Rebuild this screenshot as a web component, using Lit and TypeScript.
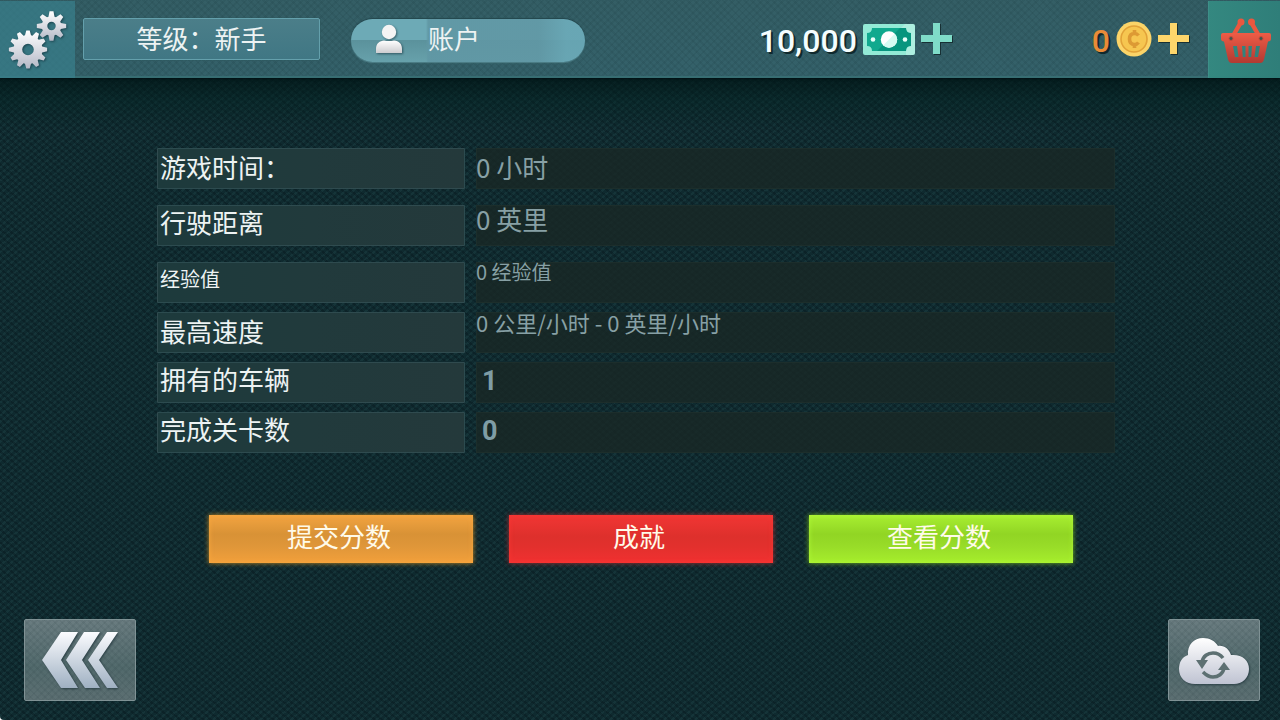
import { LitElement, html, css, svg } from "lit";
import { customElement, state } from "lit/decorators.js";
import { classMap } from "lit/directives/class-map.js";

interface Stat {
  label: string;
  value: string;
  labelClass: string;
  valueClass: string;
  group: string;
}

const STATS: Stat[] = [
  { label: "游戏时间：", value: "0 小时", labelClass: "", valueClass: "", group: "loose" },
  { label: "行驶距离", value: "0 英里", labelClass: "lifted", valueClass: "raised", group: "loose" },
  { label: "经验值", value: "0 经验值", labelClass: "small lifted", valueClass: "small high", group: "" },
  { label: "最高速度", value: "0 公里/小时 - 0 英里/小时", labelClass: "", valueClass: "medium high", group: "" },
  { label: "拥有的车辆", value: "1", labelClass: "lifted", valueClass: "count", group: "" },
  { label: "完成关卡数", value: "0", labelClass: "lifted", valueClass: "count", group: "" },
];

const split = (names: string) =>
  Object.fromEntries(names.split(" ").filter(Boolean).map((n) => [n, true]));

/** Outline of a cog wheel with a round hole in the middle. */
function cog(cx: number, cy: number, outer: number, base: number, hole: number, teeth: number) {
  const pts: string[] = [];
  const step = (Math.PI * 2) / teeth;
  for (let i = 0; i < teeth; i++) {
    const a = i * step - Math.PI / 2;
    for (const [offset, r] of [[-0.4, base], [-0.17, outer], [0.17, outer], [0.4, base]]) {
      const t = a + offset * step;
      pts.push(`${(cx + r * Math.cos(t)).toFixed(2)} ${(cy + r * Math.sin(t)).toFixed(2)}`);
    }
  }
  return `M${pts.join("L")}ZM${cx - hole} ${cy}a${hole} ${hole} 0 1 0 ${hole * 2} 0a${hole} ${hole} 0 1 0 ${-hole * 2} 0Z`;
}

const silver = (id: string, from = "#ffffff", to = "#b4b8c6") => svg`
  <linearGradient id=${id} x1="0" y1="0" x2="0" y2="1">
    <stop offset="0" stop-color=${from}></stop><stop offset="1" stop-color=${to}></stop>
  </linearGradient>`;

@customElement("app-root")
export class AppRoot extends LitElement {
  @state() private stats = STATS;

  static styles = css`
    :host {
      display: flex;
      flex-direction: column;
      min-height: 100vh;
      box-sizing: border-box;
      border-radius: 0 0 0 4px;
      overflow: hidden;
      font-family: "Noto Sans CJK SC", sans-serif;
      color: #edf3f3;
      background:
        linear-gradient(180deg, rgba(0, 22, 22, 0.7) 78px, rgba(0, 34, 32, 0.4) 100px, transparent 130px),
        repeating-linear-gradient(40deg, rgba(0, 8, 14, 0.22) 0 2px, transparent 2px 5px),
        repeating-linear-gradient(-40deg, rgba(46, 92, 94, 0.2) 0 2px, transparent 2px 5px),
        #0f2a2f;
    }
    button {
      border: 0;
      margin: 0;
      padding: 0;
      font: inherit;
      color: inherit;
      cursor: pointer;
    }
    svg { display: block; }
    .bar {
      display: flex;
      align-items: center;
      height: 78px;
      background:
        repeating-linear-gradient(45deg, rgba(20, 50, 55, 0.1) 0 2px, transparent 2px 5px),
        repeating-linear-gradient(-45deg, rgba(20, 50, 55, 0.1) 0 2px, transparent 2px 5px),
        linear-gradient(#345e65, #34616a);
      box-shadow: inset 0 -2px #376d72, 0 1px 2px #001014;
    }
    .settings {
      width: 75px;
      height: 77px;
      background: rgba(57, 128, 141, 0.7);
    }
    .settings path, .silver { filter: drop-shadow(1px 1px 1px rgba(0, 20, 30, 0.5)); }
    .level {
      box-sizing: border-box;
      width: 237px;
      height: 42px;
      margin: 0 31px 0 8px;
      border: 1px solid #64a0ac;
      border-radius: 2px;
      background: linear-gradient(#4b7e89, #407784);
      font-size: 26px;
      line-height: 38px;
      text-align: center;
      box-shadow: 0 0 1px #22464e;
    }
    .account {
      display: flex;
      align-items: center;
      width: 234px;
      height: 43px;
      margin-top: 2px;
      padding-left: 24px;
      box-sizing: border-box;
      border-radius: 22px;
      gap: 25px;
      font-size: 26px;
      line-height: 38px;
      background:
        linear-gradient(90deg, transparent 32%, rgba(96, 151, 164, 0.9) 33% 80%, rgba(104, 166, 180, 0.9) 92%),
        linear-gradient(#6daab6 0 48%, #5b929c 50%, #67a1ab);
      box-shadow: 0 -1px 1px #24474e, 0 1px 1px #4e8089;
    }
    .account span { padding-bottom: 4px; }
    .account svg { margin-top: -2px; }
    .purse {
      display: flex;
      align-items: center;
      gap: 6px;
      font: 500 32px/40px Roboto, sans-serif;
      text-shadow: 2px 2px 0 #10292d;
    }
    .purse span { padding-top: 4px; }
    .cash { margin-left: auto; color: #f4fdff; }
    .coins { margin: 0 19px 0 140px; color: #e98b38; }
    .plus svg { filter: drop-shadow(1px 1px 0 #173034); }
    .plus { background: none; padding-bottom: 2px; }
    .shop {
      width: 72px;
      height: 77px;
      background: linear-gradient(90deg, #348880, #2f7e79);
      box-shadow: inset 1px 0 #3d8f88;
    }
    .stats {
      margin: 0;
      padding: 70px 165px 0 157px;
      display: flex;
      flex-direction: column;
      gap: 9px;
    }
    .row {
      display: grid;
      grid-template-columns: 308px 1fr;
      gap: 11px;
    }
    .loose { margin-bottom: 7px; }
    .label, .value {
      box-sizing: border-box;
      height: 41px;
      margin: 0;
      font-size: 26px;
      line-height: 38px;
      white-space: nowrap;
    }
    .label {
      padding-left: 2px;
      border: 1px solid rgba(60, 92, 98, 0.5);
      border-radius: 1px;
      line-height: 36px;
      background: linear-gradient(90deg, #1d3a3c, #213a3c 50%, #24393b);
    }
    .value {
      color: #87a0a5;
      background: rgba(25, 40, 38, 0.8);
      box-shadow: inset 0 0 0 1px rgba(32, 48, 46, 0.7);
    }
    .small { font-size: 20px; }
    .medium { font-size: 22px; }
    .label.lifted { line-height: 32px; }
    .raised { line-height: 28px; }
    .high { line-height: 20px; }
    .count {
      padding-left: 6px;
      font-family: Roboto, sans-serif;
      font-weight: 700;
      font-size: 27px;
      color: #7f9da5;
    }
    .actions {
      display: flex;
      justify-content: center;
      gap: 36px;
      padding: 62px 0 0 2px;
    }
    .action {
      width: 264px;
      height: 48px;
      padding: 0 4px 6px 0;
      font-size: 26px;
      line-height: 40px;
      color: #fffbe9;
    }
    .submit {
      background: linear-gradient(#f3a440, #d89236 40%, #df9639 65%, #f2a03b);
      box-shadow: 0 0 5px #c58a26, inset 0 0 5px #faa83f;
    }
    .awards {
      background: linear-gradient(#f13634, #de302c 45%, #e2302d 65%, #f13131);
      box-shadow: 0 0 5px #a42d32, inset 0 0 5px #fa3634;
    }
    .scores {
      background: linear-gradient(#a8ef31, #91d524 40%, #98dc28 65%, #a6ee2d);
      box-shadow: 0 0 5px #72b41f, inset 0 0 5px #b0fa38;
    }
    .foot {
      display: flex;
      justify-content: space-between;
      margin-top: auto;
      padding: 0 20px 19px 24px;
    }
    .tile {
      display: grid;
      place-items: center;
      box-sizing: border-box;
      height: 82px;
      border: 1px solid #809295;
      border-radius: 2px;
      background:
        repeating-linear-gradient(45deg, rgba(30, 50, 55, 0.08) 0 2px, transparent 2px 5px),
        repeating-linear-gradient(-45deg, rgba(30, 50, 55, 0.08) 0 2px, transparent 2px 5px),
        linear-gradient(#6a7c80, #526a6c 60%, #5c6f72);
    }
    .back { width: 112px; }
    .sync { width: 92px; }
  `;

  private plus(color: string) {
    return html`<svg width="31" height="31" viewBox="0 0 31 31" aria-hidden="true">
      <path fill=${color} d="M12 0h7v12h12v7H19v12h-7V19H0v-7h12z"></path>
    </svg>`;
  }

  render() {
    return html`
      <header class="bar">
        <button class="settings" aria-label="设置">
          <svg width="75" height="77" viewBox="0 0 75 77">
            <defs>${silver("cogs")}</defs>
            <path fill="url(#cogs)" fill-rule="evenodd" d=${cog(28, 48.5, 19.2, 14.5, 5.8, 12)}></path>
            <path fill="url(#cogs)" fill-rule="evenodd" d=${cog(51.5, 25, 14.8, 9.8, 4.2, 8)}></path>
          </svg>
        </button>
        <div class="level">等级：新手</div>
        <button class="account">
          <svg class="silver" width="28" height="30" viewBox="0 0 28 30" aria-hidden="true">
            <defs>${silver("person", "#ffffff", "#cdcdd0")}</defs>
            <circle cx="14" cy="8" r="7.2" fill="#f4f4f4"></circle>
            <path fill="url(#person)" d="M1 29v-4c0-6 4-8 8-8.500q5 1 10 0c5 .5 8 3 8 8.500v4z"></path>
          </svg>
          <span>账户</span>
        </button>
        <div class="purse cash">
          <span>10,000</span>
          <svg width="52" height="31" viewBox="0 0 52 31" aria-hidden="true">
            <rect width="52" height="31" rx="2" fill="#93ead6"></rect>
            <path fill="#11a98e" d="M9 4h34q0 5 5 5v13q-5 0-5 5H9q0-5-5-5V9q5 0 5-5z"></path>
            <path fill="#07957e" d="M37 4h6q0 5 5 5v13q-5 0-5 5H14z"></path>
            <path fill="#ffffff" opacity=".25" d="M42 0h8q2 0 2 2v27q0 2-2 2h-7v-4q0-5 5-5V9q-5 0-5-5h-5z"></path>
            <circle cx="26" cy="15.500" r="8.200" fill="#fff"></circle>
            <path fill="#d5fbf2" d="M31.800 9.700a8.200 8.200 0 0 1-11.600 11.600z"></path>
            <circle cx="10" cy="15.500" r="2.300" fill="#e9fffa"></circle>
            <circle cx="42" cy="15.500" r="2.300" fill="#e9fffa"></circle>
          </svg>
          <button class="plus" aria-label="购买现金">${this.plus("#7fdcc8")}</button>
        </div>
        <div class="purse coins">
          <span>0</span>
          <svg width="36" height="36" viewBox="0 0 36 36" aria-hidden="true">
            <circle cx="18" cy="18" r="17.500" fill="#fbd468"></circle>
            <circle cx="18" cy="18" r="13" fill="#f6c650" stroke="#e2a238" stroke-width="1.600"></circle>
            <path fill="none" stroke="#dd9a34" stroke-width="3.600" d="M22.500 14.500q-1.500-2-4-2-5 0-5 5.500t5 5.500q2.500 0 4-2M18.500 9v4M18.500 23v4"></path>
          </svg>
          <button class="plus" aria-label="购买金币">${this.plus("#fdd66b")}</button>
        </div>
        <button class="shop" aria-label="商店">
          <svg width="72" height="77" viewBox="0 0 72 77">
            <defs>${silver("basket", "#ee5c46", "#b23a32")}</defs>
            <g fill="none" stroke="#e9573f" stroke-linecap="round">
              <path stroke-width="4.500" d="M25 35L33 21M51 35L43 21"></path>
              <path stroke-width="7" d="M33 21v.1M43.500 21v.1"></path>
            </g>
            <path fill="url(#basket)" fill-rule="evenodd" d="M15 32h46q2 0 2 2v4q0 2-3 2.500l-4 18q-1 3.500-4 3.500H24q-3 0-4-3.500l-4-18q-3-.5-3-2.500v-4q0-2 2-2zM25 45l2 11h3.500l-1.500-11zM34 45l.8 11h2.700v-11zM40.500 45v11h2.700l.8-11zM48 45l-1.500 11h3.500l2-11z"></path>
            <g fill="#3d5750" stroke="#c84a3a"><circle cx="23" cy="37.500" r="2"></circle><circle cx="53" cy="37.500" r="2"></circle></g>
          </svg>
        </button>
      </header>

      <dl class="stats">
        ${this.stats.map(
          (s) => html`<div class=${classMap({ row: true, ...split(s.group) })}>
            <dt class=${classMap({ label: true, ...split(s.labelClass) })}>${s.label}</dt>
            <dd class=${classMap({ value: true, ...split(s.valueClass) })}>${s.value}</dd>
          </div>`
        )}
      </dl>

      <div class="actions">
        <button class="action submit">提交分数</button>
        <button class="action awards">成就</button>
        <button class="action scores">查看分数</button>
      </div>

      <footer class="foot">
        <button class="tile back" aria-label="返回">
          <svg class="silver" width="76" height="56" viewBox="0 0 76 56">
            <defs>${silver("arrow", "#fbfcff", "#9fb0c2")}</defs>
            <path fill="url(#arrow)" d="M19 0h17L19 28l17 28H19L0 28z"></path>
            <path fill="url(#arrow)" d="M42 0h16L40 28l18 28H43L24 28z"></path>
            <path fill="url(#arrow)" d="M65 0h11L57 28l19 28H65L46 28z"></path>
          </svg>
        </button>
        <button class="tile sync" aria-label="云同步">
          <svg class="silver" width="72" height="48" viewBox="0 0 72 48">
            <defs>${silver("cloud", "#ffffff", "#bfc3d2")}</defs>
            <path fill="url(#cloud)" d="M17 48C8 48 1 42 1 33c0-7 3-12 9-14C9 9 16 2 25 2c7 0 12 3 15 8 6-1 11 3 13 9 11-1 18 5 18 14 0 9-7 15-15 15z"></path>
            <g fill="none" stroke="#5d7072" stroke-width="3.500">
              <path d="M24 26c1-6 6-9 11-9 4 0 7 1 10 5"></path>
              <path d="M46 32c-1 6-6 9-11 9-4 0-7-2-10-5"></path>
            </g>
            <path fill="#5d7072" d="M18 24h12l-6 9zM40 34h12l-6-8z"></path>
          </svg>
        </button>
      </footer>
    `;
  }
}
